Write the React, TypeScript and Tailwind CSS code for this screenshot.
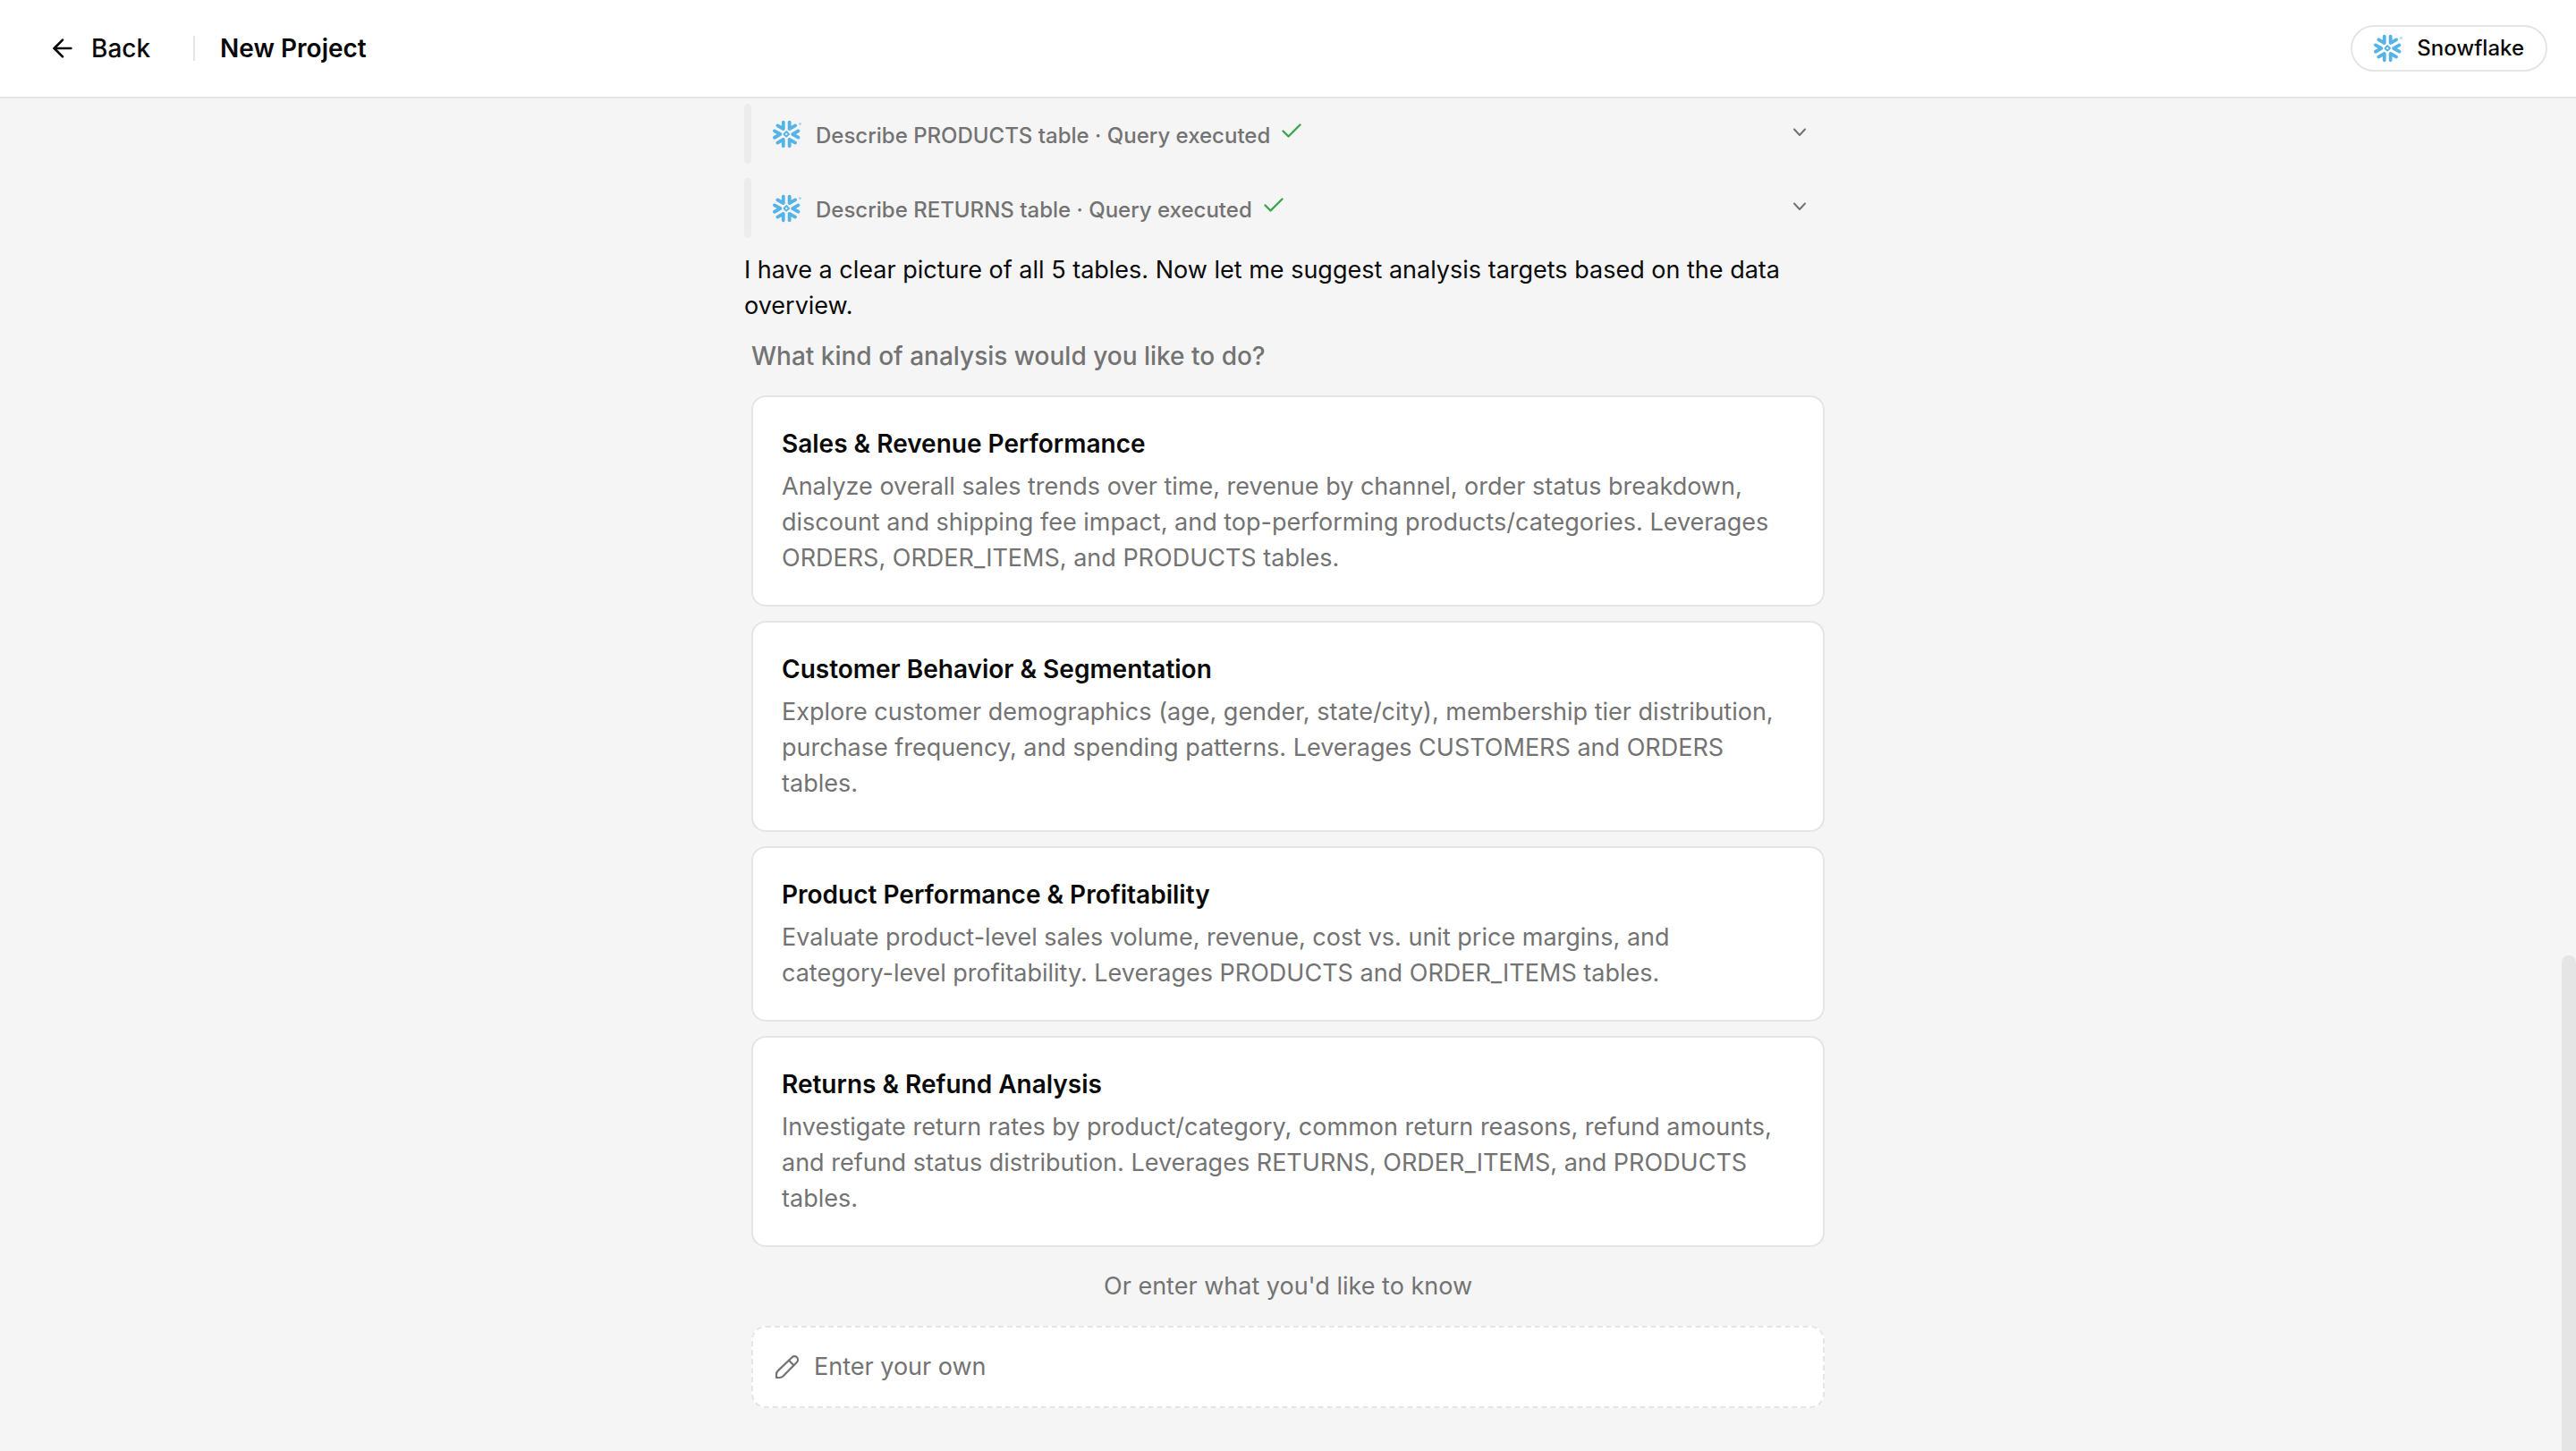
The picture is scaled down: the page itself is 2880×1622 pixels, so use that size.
import { SiSnowflake } from "react-icons/si";
import { ArrowLeft } from "lucide-react";

const queries = ["Describe PRODUCTS table", "Describe RETURNS table"];

const suggestions = [
  {
    title: "Sales & Revenue Performance",
    description:
      "Analyze overall sales trends over time, revenue by channel, order status breakdown, discount and shipping fee impact, and top-performing products/categories. Leverages ORDERS, ORDER_ITEMS, and PRODUCTS tables.",
  },
  {
    title: "Customer Behavior & Segmentation",
    description:
      "Explore customer demographics (age, gender, state/city), membership tier distribution, purchase frequency, and spending patterns. Leverages CUSTOMERS and ORDERS tables.",
  },
  {
    title: "Product Performance & Profitability",
    description:
      "Evaluate product-level sales volume, revenue, cost vs. unit price margins, and category-level profitability. Leverages PRODUCTS and ORDER_ITEMS tables.",
  },
  {
    title: "Returns & Refund Analysis",
    description:
      "Investigate return rates by product/category, common return reasons, refund amounts, and refund status distribution. Leverages RETURNS, ORDER_ITEMS, and PRODUCTS tables.",
  },
];

function CheckIcon() {
  return (
    <svg className="w-6 h-6 mb-2" viewBox="0 0 24 24" fill="none" stroke="currentColor" strokeWidth="2.4" strokeLinecap="round" strokeLinejoin="round">
      <path d="m2.500 12.500 6 6 13-13" />
    </svg>
  );
}

function ChevronIcon() {
  return (
    <svg className="w-6 h-6" viewBox="0 0 24 24" fill="none" stroke="currentColor" strokeWidth="2" strokeLinecap="round" strokeLinejoin="round">
      <path d="m6 8.500 6 6.500 6-6.500" />
    </svg>
  );
}

function PencilIcon() {
  return (
    <svg className="w-8 h-8 shrink-0" viewBox="0 0 32 32" fill="none" stroke="currentColor" strokeWidth="2.2" strokeLinecap="round" strokeLinejoin="round">
      <path d="M4 28v-3.5c0-1.500.6-3 1.700-4.100L21.500 5.300a3.800 3.800 0 0 1 5.400 5.400L11.600 26.300A6 6 0 0 1 7.500 28z" />
      <path d="m18 8.700 5.300 5.300" />
    </svg>
  );
}

function QueryRow({ label }: { label: string }) {
  return (
    <div className="flex items-stretch h-[67px]">
      <div className="w-2 rounded bg-[#ececec]" />
      <button className="flex items-center flex-1 px-6 text-2xl font-medium text-left text-neutral-500">
        <SiSnowflake className="w-8 h-8 text-[#56b3e6]" />
        <span className="pt-1 pl-4 pr-3">{label} · Query executed</span>
        <span className="text-[#3aa64c]">
          <CheckIcon />
        </span>
        <span className="pb-1 ml-auto">
          <ChevronIcon />
        </span>
      </button>
    </div>
  );
}

export default function App() {
  return (
    <div className="relative flex flex-col min-h-screen bg-neutral-100 text-neutral-950 text-[28px] leading-10 font-['Inter',sans-serif]">
      <header className="flex items-center h-[110px] pl-[54px] pr-8 bg-white border-b-2 border-neutral-200">
        <button className="flex items-center gap-4 font-medium">
          <ArrowLeft className="w-8 h-8" />
          Back
        </button>
        <div className="w-0.5 h-7 ml-12 mr-7 bg-neutral-200" />
        <h1 className="font-semibold">New Project</h1>
        <button className="flex items-center h-[52px] gap-4 px-6 ml-auto text-2xl font-medium border-2 border-neutral-200 rounded-full">
          <SiSnowflake className="w-8 h-8 text-[#56b3e6]" />
          Snowflake
        </button>
      </header>

      <main className="flex flex-col w-full max-w-[1216px] gap-4 pt-1.5 pb-12 mx-auto">
        {queries.map((label) => (
          <QueryRow key={label} label={label} />
        ))}
        <p className="text-[27px] leading-10">
          I have a clear picture of all 5 tables. Now let me suggest analysis
          targets based on the data overview.
        </p>
        <section className="flex flex-col px-2">
          <h2 className="font-medium text-neutral-500">
            What kind of analysis would you like to do?
          </h2>
          <div className="flex flex-col gap-4 mt-6">
            {suggestions.map((item) => (
              <button
                key={item.title}
                className="flex flex-col gap-2 py-8 pl-8 pr-11 text-left bg-white border-2 border-neutral-200 rounded-2xl"
              >
                <span className="font-semibold">{item.title}</span>
                <span className="text-[27px] leading-10 text-neutral-500">
                  {item.description}
                </span>
              </button>
            ))}
          </div>
          <label
            htmlFor="own"
            className="my-6 text-[27px] leading-10 text-center text-neutral-500"
          >
            Or enter what you'd like to know
          </label>
          <div className="flex items-center h-[92px] gap-3.5 px-[22px] text-[27px] leading-10 text-neutral-500 bg-white border-2 border-dashed border-neutral-200 rounded-2xl">
            <PencilIcon />
            <input
              id="own"
              type="text"
              placeholder="Enter your own"
              className="flex-1 outline-none placeholder:text-neutral-500"
            />
          </div>
        </section>
      </main>

      {/* scrollbar thumb */}
      <div className="absolute bottom-0 right-0 w-4 h-[554px] rounded-t-full bg-neutral-200" />
    </div>
  );
}
